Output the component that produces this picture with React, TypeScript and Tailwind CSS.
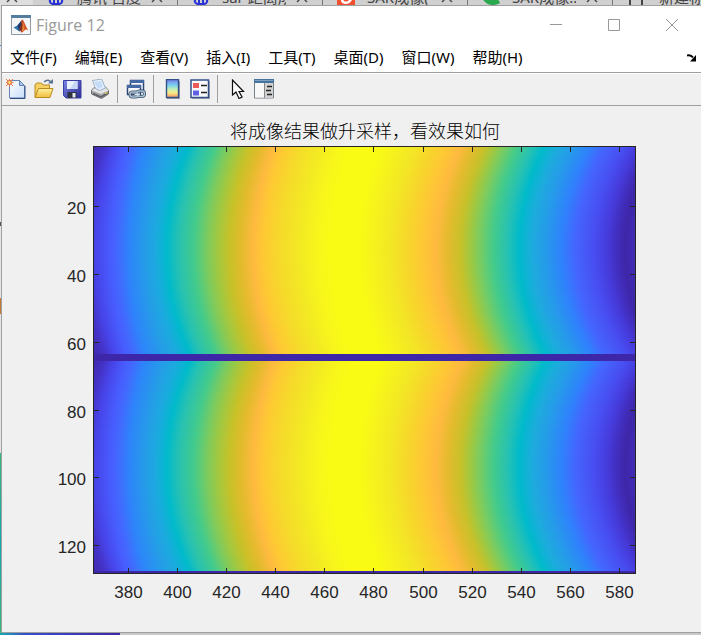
import type { ReactNode } from 'react';

const tabs = [
  { title: '腾讯 百度', icon: 'paw' },
  { title: 'sar 距离成', icon: 'paw' },
  { title: 'SAR成像(', icon: 'red' },
  { title: 'SAR成像..', icon: 'green' },
];

const menus = ['文件(F)', '编辑(E)', '查看(V)', '插入(I)', '工具(T)', '桌面(D)', '窗口(W)', '帮助(H)'];

// [x offset at the middle of a lobe, extra offset at its edge, colour]
const contours: [number, number, string][] = [
  [-22, 20, '#3e26a8'],
  [-8, 20, '#4433c8'],
  [3, 18, '#4745ea'],
  [18, 15, '#485dfe'],
  [25, 15, '#4269fe'],
  [36, 15, '#2e84fa'],
  [52, 18, '#259ce8'],
  [63, 20, '#1caadf'],
  [74, 23, '#00bacb'],
  [85, 22, '#26c1b3'],
  [101, 22, '#44cb8b'],
  [114, 21, '#7bcb5f'],
  [125, 21, '#a3c83f'],
  [137, 21, '#c9c128'],
  [148, 21, '#e2bb2c'],
  [160, 21, '#feba3f'],
  [171, 20, '#fec933'],
  [188, 20, '#f5db2a'],
  [208, 20, '#f3ea23'],
  [227, 20, '#f8f71a'],
  [240, 20, '#f9fb14'],
  [266, 22, '#f9fb14'],
  [279, 23, '#f6f31c'],
  [298, 24, '#f3e725'],
  [315, 25, '#f7d62b'],
  [330, 26, '#fec735'],
  [343, 26, '#feba3f'],
  [355, 26, '#e4bb2d'],
  [368, 26, '#c6c12a'],
  [377, 26, '#a1c840'],
  [387, 26, '#78cc62'],
  [400, 26, '#44cb8b'],
  [415, 26, '#25c1b4'],
  [426, 26, '#00bacb'],
  [439, 27, '#1dabdd'],
  [453, 28, '#269aea'],
  [469, 30, '#2f81fc'],
  [482, 30, '#4466fe'],
  [500, 32, '#484ff2'],
  [514, 32, '#463bdc'],
  [523, 32, '#422fc0'],
  [532, 32, '#3e26a8'],
  [543, 32, '#422db9'],
];

const LEFT = 91;
const WIDTH = 543;
const ROW = 3.39;
const rows = Array.from({ length: 64 }, (_, i) => i);
const lobes = [143.5, 360.5];

const xTicks = Array.from({ length: 11 }, (_, i) => ({
  label: 380 + i * 20,
  x: Math.floor(126.2 + i * 49.15) + 0.5,
}));
const yTicks = Array.from({ length: 6 }, (_, i) => ({
  label: 20 + i * 20,
  y: Math.floor(100.6 + i * 67.8) + 0.5,
}));

function Heatmap() {
  return (
    <g>
      <defs>
        {rows.map((i) => {
          const d = (i - 31.5) / 31;
          return (
            <linearGradient key={i} id={`row-${i}`} gradientUnits="userSpaceOnUse" x1={0} x2={700} y1={0} y2={0}>
              {contours.map(([x, shift, color]) => (
                <stop key={x} offset={(LEFT + x + shift * d * d) / 700} stopColor={color} />
              ))}
            </linearGradient>
          );
        })}
        <clipPath id="axes-clip">
          <rect x={LEFT} y={40} width={WIDTH} height={428} />
        </clipPath>
      </defs>
      <g clipPath="url(#axes-clip)" shapeRendering="crispEdges">
        <rect x={LEFT} y={40} width={WIDTH} height={428} fill="#3e26a8" />
        {lobes.map((mid) => (
          <g key={mid}>
            {rows.map((i) => (
              <rect
                key={i}
                x={LEFT}
                y={mid + (i - 32) * ROW}
                width={WIDTH}
                height={i === 63 ? 0 : ROW}
                fill={`url(#row-${i})`}
              />
            ))}
          </g>
        ))}
        <rect x={LEFT} y={248} width={WIDTH} height={7} fill="#3e26a8" />
        <rect x={LEFT} y={465} width={WIDTH} height={3} fill="#3e26a8" />
      </g>
    </g>
  );
}

function Plot() {
  return (
    <svg
      viewBox="0 0 699 526"
      className="block h-auto w-full font-['Liberation_Sans',sans-serif]"
      role="img"
      aria-label="将成像结果做升采样，看效果如何"
    >
      <text
        x={363}
        y={32}
        textAnchor="middle"
        fill="#000"
        className="font-['Liberation_Sans','Noto_Sans_CJK_SC',sans-serif] text-[18px] font-light"
      >
        将成像结果做升采样，看效果如何
      </text>
      <Heatmap />
      <g stroke="#262626" fill="none">
        <rect x={91.5} y={40.5} width={542} height={427} />
        {xTicks.map(({ x }) => (
          <path key={x} d={`M${x} 41v5M${x} 467v-5`} />
        ))}
        {yTicks.map(({ y }) => (
          <path key={y} d={`M92 ${y}h5M633 ${y}h-5`} />
        ))}
      </g>
      <g fill="#262626" className="text-[17px]">
        {xTicks.map(({ label, x }) => (
          <text key={label} x={x} y={492} textAnchor="middle">
            {label}
          </text>
        ))}
        {yTicks.map(({ label, y }) => (
          <text key={label} x={84} y={y + 7} textAnchor="end">
            {label}
          </text>
        ))}
      </g>
    </svg>
  );
}

function ToolButton({ label, children }: { label: string; children: ReactNode }) {
  return (
    <button type="button" aria-label={label} className="size-5">
      <svg viewBox="0 0 20 20" className="block size-5">
        {children}
      </svg>
    </button>
  );
}

function Toolbar() {
  return (
    <div className="flex h-[34px] items-center border-y border-[#a0a0a0] bg-[#f0f0f0] pl-1 shadow-[inset_0_1px_0_#fff]">
      <svg className="absolute size-0">
        <defs>
          <linearGradient id="paper" x1="0" y1="0" x2="1" y2="1">
            <stop offset="0" stopColor="#fff" />
            <stop offset="1" stopColor="#c8defa" />
          </linearGradient>
          <linearGradient id="folder" x1="0" y1="0" x2="0" y2="1">
            <stop offset="0" stopColor="#fff0a0" />
            <stop offset="1" stopColor="#f0bd3c" />
          </linearGradient>
          <linearGradient id="disk" x1="0" y1="0" x2="1" y2="1">
            <stop offset="0" stopColor="#7f86e8" />
            <stop offset="1" stopColor="#272a8c" />
          </linearGradient>
          <linearGradient id="bar" x1="0" y1="0" x2="0" y2="1">
            <stop offset="0" stopColor="#7b7be6" />
            <stop offset=".3" stopColor="#76cdf4" />
            <stop offset=".55" stopColor="#c4f0b4" />
            <stop offset=".75" stopColor="#fbe982" />
            <stop offset="1" stopColor="#f3905f" />
          </linearGradient>
        </defs>
      </svg>
      <div className="flex h-7 items-center gap-2 border-r border-[#a0a0a0] pr-[7px]">
        <ToolButton label="新建图窗">
          <path d="M3.500 1.500h10l5 5v12.500h-15z" fill="url(#paper)" stroke="#6482b4" />
          <path d="M19 7v12.500H4" fill="none" stroke="#2f4c80" />
          <path d="M13.500 1.500v5h5z" fill="#a9c6ee" stroke="#6482b4" />
          <path d="M0 0l7 7M7 0l-7 7M3.500 0v7.500M0 3.500h7.500" stroke="#e5764b" />
          <circle cx="3.500" cy="3.500" r="2" fill="#ffd26b" stroke="#dd6c40" />
        </ToolButton>
        <ToolButton label="打开文件">
          <path d="M1 18V6l1.500-2h5L9 6h6.500v4" fill="#f6d264" stroke="#b98a20" />
          <path d="M1 18.500l3.500-9H19l-3 9z" fill="url(#folder)" stroke="#b98a20" />
          <path d="M10 3c3-3 6-2 7 1" fill="none" stroke="#58728f" strokeWidth="1.500" />
          <path d="M14 4.500h5V0z" fill="#58728f" />
        </ToolButton>
        <ToolButton label="保存图窗">
          <path d="M1.500 1.500h17.500v17.500H4l-2.500-2.500z" fill="url(#disk)" stroke="#3a3fa5" />
          <path d="M5 2h10.500v8H5z" fill="#e9f0ff" />
          <path d="M13 2h2.500v8H8z" fill="#c6d6f5" />
          <path d="M5.500 13h9v6h-9z" fill="#30343f" />
          <path d="M10.500 14h3v4.500h-3z" fill="#e2e5ee" />
        </ToolButton>
        <ToolButton label="打印图窗">
          <path d="M1.500 11.500l2-2.500 12-1 3 3.500v3.500l-7 4.500-10-4.500z" fill="#a4a5a9" stroke="#6c6e73" />
          <path d="M2 11.500l9 3.500 7.500-3.500-3-3-12 1z" fill="#e4e4e6" />
          <path d="M2.500 1.500l9-1.500 4 9-6 2.500-4-2z" fill="#e5f1ff" stroke="#8a9eb8" strokeWidth=".8" />
          <path d="M4 3l7-1 2 6-5 2z" fill="#c5dcf8" />
          <path d="M3 14.500l8 3.500 7-4" fill="none" stroke="#5d5f64" strokeWidth="1.500" />
          <path d="M15 14h2.500" stroke="#d8c84e" strokeWidth="1.500" />
        </ToolButton>
      </div>
      <div className="flex h-7 items-center border-r border-[#a0a0a0] pr-[7px] pl-2">
        <ToolButton label="链接绘图">
          <path d="M4.500 1.500h13v10h-13z" fill="#f8fafc" stroke="#2d4674" strokeWidth="1.500" />
          <path d="M4 1h14v3H4z" fill="#436aa5" />
          <path d="M1.500 6.500h13v9h-13z" fill="#f8fafc" stroke="#2d4674" strokeWidth="1.500" />
          <path d="M1 6h14v3H1z" fill="#436aa5" />
          <g fill="none">
            <rect x="4" y="13" width="8" height="5" rx="2.500" stroke="#3e566e" strokeWidth="3" />
            <rect x="11" y="12" width="7.500" height="5.500" rx="2.500" stroke="#3e566e" strokeWidth="3" />
            <rect x="4" y="13" width="8" height="5" rx="2.500" stroke="#a9c0d2" strokeWidth="1.400" />
            <rect x="11" y="12" width="7.500" height="5.500" rx="2.500" stroke="#a9c0d2" strokeWidth="1.400" />
            <path d="M8.500 15.500h5.500" stroke="#dae6ef" strokeWidth="1.500" />
          </g>
        </ToolButton>
      </div>
      <div className="flex h-7 items-center gap-2 border-r border-[#a0a0a0] pr-[7px] pl-2">
        <ToolButton label="插入颜色栏">
          <path d="M5 2h13v18H5z" fill="#9b9fa7" />
          <path d="M4.500 .500h12v18h-12z" fill="url(#bar)" stroke="#33508a" strokeWidth="1.400" />
        </ToolButton>
        <ToolButton label="插入图例">
          <path d="M2 2h18v18H2z" fill="#a3a7af" />
          <path d="M1 1h17.500v17.500H1z" fill="#f9f9fc" stroke="#33508a" strokeWidth="1.500" />
          <path d="M3 4h6v5H3z" fill="#eb5959" />
          <path d="M3 11.500h6v5H3z" fill="#6060e5" />
          <path d="M11 6.500h6M11 13.500h6" stroke="#222" strokeWidth="1.500" />
        </ToolButton>
      </div>
      <div className="flex h-7 items-center gap-2 pl-2">
        <ToolButton label="编辑绘图">
          <path d="M7.500 2.500v14l3.500-3 3 6.500 3-1.500-3-6h4z" fill="#aaa" opacity=".6" />
          <path d="M6.500 1v15l3.500-3 3 6.500 3-1.500-3-5.500h4.500z" fill="#fff" stroke="#111" strokeWidth="1.200" />
        </ToolButton>
        <ToolButton label="打开属性检查器">
          <path d="M.500 .500h19v18.500h-19z" fill="#ededed" stroke="#777e86" />
          <path d="M0 0h20v4H0z" fill="#47729c" />
          <path d="M1 1h18v1H1z" fill="#7ba1c3" />
          <path d="M1 4h9v14.500H1z" fill="#f8f8f8" />
          <path d="M10.500 4v15" stroke="#888" />
          <path d="M11 4h8v15h-8z" fill="#d0d1d2" />
          <path d="M13 7.500h5M12 11.500h5M13 15.500h5" stroke="#222" strokeWidth="1.500" />
        </ToolButton>
      </div>
    </div>
  );
}

function TabIcon({ kind }: { kind: string }) {
  return (
    <svg viewBox="0 0 18 18" className="size-[18px] shrink-0">
      {kind === 'paw' && (
        <g fill="none" stroke="#2932d8" strokeWidth="2">
          <path d="M9 6c-4 3-7 5-6 8s4 2 6 2 5 1 6-2-2-5-6-8z" />
          <path d="M7 11v4M11 11v4" />
        </g>
      )}
      {kind === 'red' && (
        <>
          <path d="M0 0h18v18H0z" fill="#f0502f" />
          <path d="M14 11c-2 5-9 5-9 0V6" fill="none" stroke="#fff" strokeWidth="2.500" />
        </>
      )}
      {kind === 'green' && <path d="M2 5c0 8 7 12 15 8" fill="none" stroke="#2ca84f" strokeWidth="5" />}
    </svg>
  );
}

function Cross() {
  return (
    <svg viewBox="0 0 12 12" className="size-3 shrink-0" fill="none" stroke="#444" strokeWidth="1.400">
      <path d="M1 1l10 10M11 1L1 11" />
    </svg>
  );
}

function BrowserTabs() {
  return (
    <div className="flex h-[5px] items-end overflow-hidden bg-[#d0d0d0] font-['Noto_Sans','Noto_Sans_CJK_SC',sans-serif] text-[15px] leading-4 text-[#444]">
      <div className="flex h-4 w-[33px] shrink-0 items-center bg-[#dedede] pl-[6px]">
        <Cross />
      </div>
      {tabs.map((tab, i) => (
        <div key={i} className="flex h-4 w-[145px] shrink-0 items-center border-r border-[#777] pr-[14px] pl-[14px]">
          <TabIcon kind={tab.icon} />
          <span className="ml-3 h-4 w-16 overflow-hidden whitespace-nowrap">{tab.title}</span>
          <span className="ml-auto flex">
            <Cross />
          </span>
        </div>
      ))}
      <div className="ml-4 h-4 w-[14px] shrink-0 border-x-2 border-[#444]" />
      <span className="ml-4 h-4 shrink-0 whitespace-nowrap">新建标签</span>
    </div>
  );
}

function MatlabLogo() {
  return (
    <svg viewBox="0 0 20 20" className="size-5">
      <path d="M.500 .500h19v19h-19z" fill="#f4f5f7" stroke="#8d9aa6" />
      <path d="M0 0h20v3H0z" fill="#527d9f" />
      <path d="M2.500 12.500l4-2 4-5 1 8-3 3z" fill="#2e75ab" />
      <path d="M6.500 10.500l4-5-1 9-1.500 1.500z" fill="#203a68" />
      <path d="M11 4.500c2 0 3 6 6.500 11-2-1.500-3-1.500-4.500.500-1 1-2 1.500-3 1.500 0-2-1-2.500-2-2.500 2-2 2-7 3-10.500z" fill="#d6592b" />
      <path d="M11 4.500c1 3 1 9-1 13 0-2-1-2.500-2-2.500 2-2 2-7 3-10.500z" fill="#842f24" />
      <path d="M11.500 6c1 3 1.500 6 1 9.500l-1.500 1c1-4 1-7 .500-10.500z" fill="#f7a13b" />
    </svg>
  );
}

function TitleBar() {
  const button = 'flex h-full w-[58px] items-center justify-center';
  return (
    <header className="flex h-[37px] items-center pl-[9px]">
      <MatlabLogo />
      <h1 className="ml-[5px] font-['Open_Sans',sans-serif] text-[16px] text-[#999]">Figure 12</h1>
      <div className="ml-auto flex h-full text-[#999]">
        <button type="button" aria-label="最小化" className={button}>
          <svg viewBox="0 0 12 12" className="size-3" stroke="currentColor">
            <path d="M0 5.500h12" />
          </svg>
        </button>
        <button type="button" aria-label="最大化" className={button}>
          <svg viewBox="0 0 12 12" className="size-3" fill="none" stroke="currentColor">
            <path d="M.500 .500h11v11h-11z" />
          </svg>
        </button>
        <button type="button" aria-label="关闭" className={button}>
          <svg viewBox="0 0 12 12" className="size-3" stroke="currentColor">
            <path d="M0 0l12 12M12 0L0 12" />
          </svg>
        </button>
      </div>
    </header>
  );
}

function MenuBar() {
  return (
    <nav className="flex h-[29px] items-center gap-[18px] pr-1 pl-2 font-['Noto_Sans','Noto_Sans_CJK_SC',sans-serif] text-[15px] text-black">
      {menus.map((menu) => (
        <button key={menu} type="button" className="whitespace-nowrap">
          {menu}
        </button>
      ))}
      <button type="button" aria-label="停靠图窗" className="ml-auto">
        <svg viewBox="0 0 10 8" className="h-2 w-[10px]">
          <path d="M0 1.500C3 .500 4.500 1.500 6 3.500" fill="none" stroke="#000" strokeWidth="2" />
          <path d="M9 1v6.500H3z" fill="#000" />
        </svg>
      </button>
    </nav>
  );
}

export default function App() {
  return (
    <div className="flex min-h-screen flex-col overflow-x-hidden bg-[#c9c9c9]">
      <BrowserTabs />
      <div className="flex">
        {/* Sliver of the windows behind */}
        <div className="flex w-px shrink-0 flex-col bg-[#e4e4e4]">
          <div className="mt-10 h-px bg-[#3b8ad0]" />
          <div className="mt-44 h-1 bg-[#555]" />
          <div className="mt-[72px] h-4 bg-[#c27a35]" />
          <div className="mt-auto h-[180px] bg-linear-to-b from-[#35b779] via-[#12aab0] to-[#35b779]" />
        </div>
        <main className="min-w-0 flex-1 border-y border-l border-[#a0a0a0] bg-white">
          <TitleBar />
          <MenuBar />
          <Toolbar />
          <div className="bg-[#f0f0f0]">
            <Plot />
          </div>
        </main>
      </div>
      <div className="h-[2px] w-[120px] bg-linear-to-r from-[#12aab0] via-[#3450c8] via-20% to-[#3e26a8]" />
    </div>
  );
}
